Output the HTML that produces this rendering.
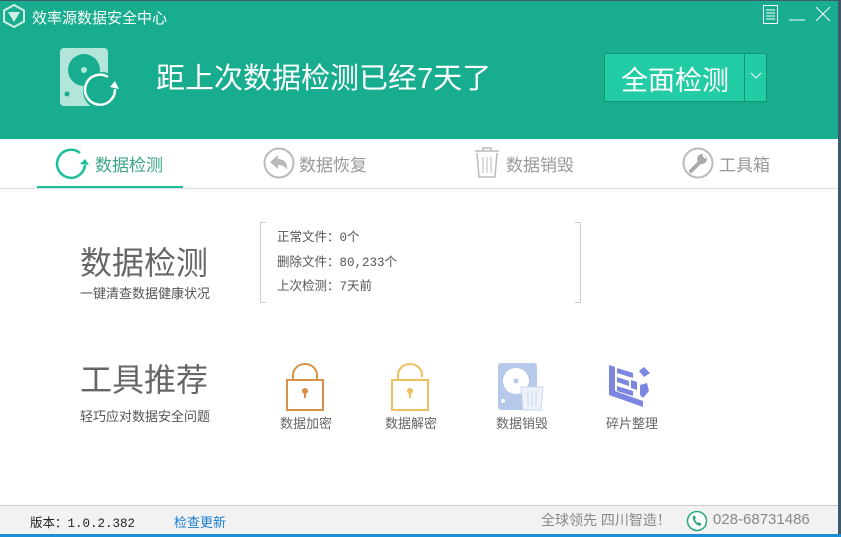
<!DOCTYPE html>
<html><head><meta charset="utf-8"><style>
*{margin:0;padding:0;box-sizing:border-box}
body{width:841px;height:537px;overflow:hidden;background:#fff;font-family:"Liberation Sans","Noto Sans CJK SC",sans-serif;position:relative}
.abs{position:absolute}
.hdr{left:0;top:0;width:841px;height:139px;background:#19ad8f}
.tab{font-size:17px;color:#999;top:151px}
</style></head><body>
<div class="abs hdr"></div>
<div class="abs" style="left:0;top:0;width:841px;height:1px;background:#3d5a6a"></div>
<svg class="abs" style="left:3px;top:4px" width="22" height="24" viewBox="0 0 22 24"><path d="M11 1 L21 6.5 V17.5 L11 23 L1 17.5 V6.5Z" fill="none" stroke="#cfeee6" stroke-width="2"/><path d="M5 8 H17 L11 18Z" fill="#cfeee6"/></svg>
<div class="abs" style="left:32px;top:7px;color:#fff;font-size:15px">效率源数据安全中心</div>
<svg class="abs" style="left:760px;top:4px" width="72" height="22"><rect x="3.5" y="1.5" width="14" height="18" fill="none" stroke="#fff"/><path d="M6 6H15M6 9H15M6 12H15M6 15H15" stroke="#fff"/><path d="M29 16H45" stroke="#fff"/><path d="M56 3L70 17M70 3L56 17" stroke="#fff"/></svg>
<svg class="abs" style="left:58px;top:47px" width="64" height="62"><rect x="2" y="1" width="48" height="58" rx="4" fill="#b4e5da"/><circle cx="26" cy="23" r="16" fill="#19ad8f"/><circle cx="26" cy="23" r="3" fill="#b4e5da"/><circle cx="9" cy="47" r="2.5" fill="#19ad8f"/><circle cx="44" cy="44" r="19" fill="#19ad8f"/><path d="M57 42 A15 15 0 1 1 50 30" fill="none" stroke="#fff" stroke-width="2.5"/><path d="M52 40 L57 34 L61 42Z" fill="#fff"/></svg>
<div class="abs" style="left:156px;top:55px;color:#fff;font-size:29px">距上次数据检测已经7天了</div>
<div class="abs" style="left:604px;top:53px;width:163px;height:49px;background:#22cda5;border:1px solid #14946f"></div>
<div class="abs" style="left:744px;top:53px;width:1px;height:49px;background:#14946f"></div>
<div class="abs" style="left:621px;top:59px;color:#fff;font-size:27px">全面检测</div>
<svg class="abs" style="left:749px;top:70px" width="14" height="10"><path d="M2 3L7 8L12 3" fill="none" stroke="#fff"/></svg>
<svg class="abs" style="left:55px;top:146px" width="34" height="34"><path d="M30 19 A14 14 0 1 1 25 7" fill="none" stroke="#1bbf9a" stroke-width="2.5"/><path d="M25 18 L30 13 L34 19Z" fill="#1bbf9a"/></svg>
<div class="abs tab" style="left:95px;color:#3aa58a">数据检测</div>
<div class="abs" style="left:37px;top:186px;width:146px;height:2px;background:#1bbf9a"></div>
<svg class="abs" style="left:263px;top:146px" width="34" height="34"><circle cx="16" cy="17" r="14.5" fill="none" stroke="#bbb" stroke-width="2"/><path d="M7 16 L15 9 V13 C22 13 25 18 24 24 C22 20 19 19 15 19 V23Z" fill="#b8b8b8"/></svg>
<div class="abs tab" style="left:299px">数据恢复</div>
<svg class="abs" style="left:473px;top:146px" width="28" height="34"><path d="M2 5H26M10 5V2H18V5" fill="none" stroke="#bbb" stroke-width="1.5"/><path d="M4 7L6 31H22L24 7" fill="none" stroke="#bbb" stroke-width="1.5"/><path d="M10 11V27M14 11V27M18 11V27" stroke="#bbb"/></svg>
<div class="abs tab" style="left:506px">数据销毁</div>
<svg class="abs" style="left:682px;top:146px" width="34" height="34"><circle cx="16" cy="17" r="14.5" fill="none" stroke="#bbb" stroke-width="2"/><path d="M9 25 L17 17" stroke="#aaa" stroke-width="4" stroke-linecap="round"/><circle cx="20" cy="13" r="5" fill="#aaa"/><path d="M21 9 L24 12" stroke="#fff" stroke-width="2"/></svg>
<div class="abs tab" style="left:719px">工具箱</div>
<div class="abs" style="left:0;top:188px;width:838px;height:1px;background:#ddd"></div>
<div class="abs" style="left:80px;top:238px;font-size:32px;color:#666">数据检测</div>
<div class="abs" style="left:80px;top:283px;font-size:13px;color:#555">一键清查数据健康状况</div>
<div class="abs" style="left:260px;top:222px;width:6px;height:81px;border:1px solid #ccc;border-right:none"></div>
<div class="abs" style="left:575px;top:222px;width:6px;height:81px;border:1px solid #ccc;border-left:none"></div>
<div class="abs" style="left:277px;top:226px;font-size:12.5px;color:#555;line-height:24.5px;font-family:'Liberation Mono','Noto Sans CJK SC',monospace">正常文件：0个<br>删除文件：80,233个<br>上次检测：7天前</div>
<div class="abs" style="left:80px;top:355px;font-size:32px;color:#666">工具推荐</div>
<div class="abs" style="left:80px;top:406px;font-size:13px;color:#555">轻巧应对数据安全问题</div>
<svg class="abs" style="left:285px;top:362px" width="40" height="50"><path d="M8 18V13A12 11 0 0 1 32 13V18" fill="none" stroke="#d9914a" stroke-width="2"/><rect x="2" y="18" width="36" height="30" fill="none" stroke="#d9914a" stroke-width="2"/><circle cx="20" cy="29" r="3" fill="#d9914a"/><path d="M19 30H21V36H19Z" fill="#d9914a"/></svg>
<div class="abs" style="left:280px;top:413px;font-size:13px;color:#666">数据加密</div>
<svg class="abs" style="left:390px;top:362px" width="40" height="50"><path d="M8 18V13A12 11 0 0 1 32 13V15" fill="none" stroke="#efbf5e" stroke-width="2"/><rect x="2" y="18" width="36" height="30" fill="none" stroke="#efbf5e" stroke-width="2"/><circle cx="20" cy="29" r="3" fill="#efbf5e"/><path d="M19 30H21V36H19Z" fill="#efbf5e"/></svg>
<div class="abs" style="left:385px;top:413px;font-size:13px;color:#666">数据解密</div>
<svg class="abs" style="left:497px;top:362px" width="48" height="50"><rect x="1" y="1" width="39" height="47" rx="3" fill="#b6c9ea"/><circle cx="19" cy="19" r="13" fill="#fff"/><circle cx="19" cy="19" r="2.5" fill="#b6c9ea"/><circle cx="6" cy="39" r="2" fill="#fff"/><path d="M24 25H46L44 48H26Z" fill="#eef2fa" stroke="#c8d6ee"/><path d="M31 29V45M35 29V45M39 29V45" stroke="#c8d6ee"/></svg>
<div class="abs" style="left:496px;top:413px;font-size:13px;color:#666">数据销毁</div>
<svg class="abs" style="left:607px;top:363px" width="46" height="46"><path d="M2 2L8 4V28L36 38V44L2 32Z" fill="#7b86e0"/><path d="M10 5L26 10V15L10 10Z" fill="#7b86e0"/><path d="M10 14L22 18V23L10 19Z" fill="#7b86e0"/><path d="M10 23L26 28V33L10 28Z" fill="#7b86e0"/><path d="M24 17L30 19V27L24 25Z" fill="#7b86e0"/><path d="M32 8L37 4L43 10L37 14Z" fill="#7b86e0"/><path d="M33 22L40 20L42 28L36 35L33 32Z" fill="#7b86e0"/></svg>
<div class="abs" style="left:606px;top:413px;font-size:13px;color:#666">碎片整理</div>
<div class="abs" style="left:0;top:505px;width:838px;height:29px;background:#f2f2f2;border-top:1px solid #ccc"></div>
<div class="abs" style="left:30px;top:512px;font-size:12.5px;color:#222;font-family:'Liberation Mono','Noto Sans CJK SC',monospace">版本：1.0.2.382</div>
<div class="abs" style="left:174px;top:512px;font-size:13px;color:#1a7fd0">检查更新</div>
<div class="abs" style="left:541px;top:510px;font-size:14px;color:#888">全球领先 四川智造！</div>
<svg class="abs" style="left:686px;top:510px" width="22" height="22"><circle cx="11" cy="11" r="9.5" fill="#fff" stroke="#2aa87e" stroke-width="1.5"/><path d="M7 6C6 9 9 15 14 16L15.5 14L13 12L12 13C10 12 9 10 9 9L10 8L8.5 5.5Z" fill="#2aa87e"/></svg>
<div class="abs" style="left:713px;top:511px;font-size:15px;color:#888">028-68731486</div>
<div class="abs" style="left:838px;top:0;width:3px;height:537px;background:#3d5a6a"></div>
<div class="abs" style="left:0;top:534px;width:841px;height:3px;background:#1c8ed6"></div>
</body></html>
